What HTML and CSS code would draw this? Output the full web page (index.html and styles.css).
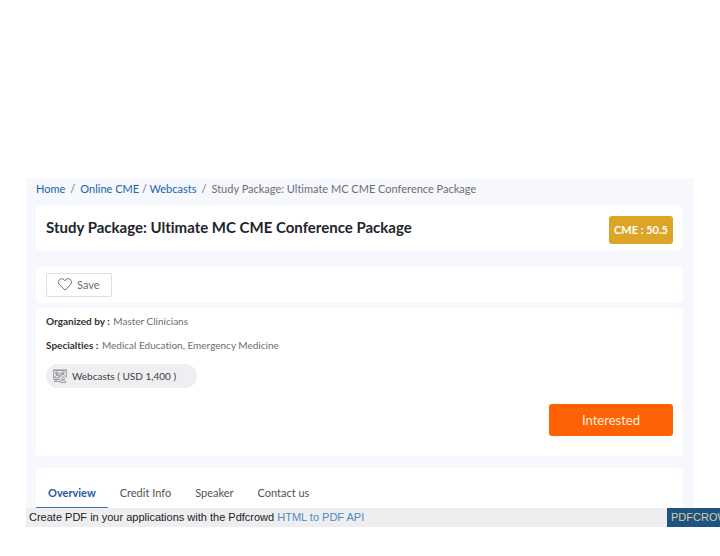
FILE: index.html
```html
<!DOCTYPE html>
<html lang="en">

<head>
    <meta charset="UTF-8">
    <meta name="viewport" content="width=device-width, initial-scale=1.0">
    <title>Study Package: Ultimate MC CME Conference Package</title>
    <link rel="stylesheet" href="styles.css">
</head>

<body>
    <main class="page">
        <nav class="breadcrumb" aria-label="Breadcrumb">
            <a href="#">Home</a>
            <span class="divider">/</span>
            <span><a href="#">Online CME</a> / <a href="#">Webcasts</a></span>
            <span class="divider">/</span>
            <span>Study Package: Ultimate MC CME Conference Package</span>
        </nav>

        <header class="card title-card">
            <h1>Study Package: Ultimate MC CME Conference Package</h1>
            <span class="credit">CME : 50.5</span>
        </header>

        <div class="card save-card">
            <button type="button" class="save-btn">
                <svg width="14" height="13" viewBox="0 0 14 13" fill="none" stroke="#6c6f73" stroke-linejoin="round">
                    <path d="M7 12.2 1.6 6.8C-.2 4.9.4 2.2 2.2 1.2 4 .2 6 .8 7 2.8 8 .8 10 .2 11.8 1.2c1.8 1 2.4 3.7.6 5.6Z" />
                </svg>
                Save
            </button>
        </div>

        <section class="card details">
            <p><strong>Organized by :</strong> Master Clinicians</p>
            <p><strong>Specialties :</strong> Medical Education, Emergency Medicine</p>
            <div class="webcast">
                <svg width="14" height="14" viewBox="0 0 14 14" fill="none" stroke="#85868a" stroke-width=".8">
                    <path d="M7 10.5H.6V1.5h12.8v7M0 1h14M1 12.4h6M3 10.5v1.9" />
                    <circle cx="4" cy="4.3" r="1.3" />
                    <circle cx="9.8" cy="4" r="1.2" />
                    <path d="M1.8 8.8c0-3.4 4.4-3.4 4.4 0ZM7.4 7.6c.2-2.6 4.6-2.6 4.8 0M6.8 3v5M2 3l4 4M8 6l4-3" />
                    <circle cx="10" cy="9.4" r="1.5" />
                    <path d="M7.2 13.5c0-3.4 5.6-3.4 5.6 0Z" />
                </svg>
                Webcasts ( USD 1,400 )
            </div>
            <button type="button" class="interested-btn">Interested</button>
        </section>

        <nav class="card tabs" aria-label="Sections">
            <a href="#" class="active">Overview</a>
            <a href="#">Credit Info</a>
            <a href="#">Speaker</a>
            <a href="#">Contact us</a>
        </nav>
    </main>

    <footer class="pdf-bar">
        <p>Create PDF in your applications with the Pdfcrowd <a href="#">HTML to PDF API</a></p>
        <a href="#" class="pdf-brand">PDFCROWD</a>
    </footer>
</body>

</html>
```

FILE: styles.css
```css
* {
    box-sizing: border-box;
}

body {
    margin: 0;
    padding-top: 178px;
    font-family: Lato, sans-serif;
    font-size: 11px;
    font-variant-ligatures: none;
    color: #6c6e73;
    background-color: #fff;
    overflow-x: hidden;
}

a {
    color: #1565a9;
    text-decoration: none;
}

p {
    margin: 0;
}

.page {
    margin: 0 26px;
    padding: 0 11px 0 10px;
    background-color: #f7f7fe;
}

.breadcrumb {
    display: flex;
    gap: 5px;
    height: 28px;
    line-height: 22px;
}

.card {
    background-color: #fff;
    border-radius: 4px;
}

.title-card {
    display: flex;
    justify-content: space-between;
    align-items: flex-start;
    padding: 10px 10px 6px;
    margin-bottom: 17px;
}

h1 {
    margin: 0;
    font-size: 15px;
    line-height: 22px;
    font-weight: bold;
    color: #212529;
}

.credit {
    padding: 0 5px;
    border-radius: 3px;
    line-height: 28px;
    font-weight: bold;
    color: #fff;
    background-color: #dda526;
}

.save-card {
    padding: 6px 10px;
    margin-bottom: 5px;
}

.save-btn {
    display: flex;
    align-items: center;
    gap: 5px;
    height: 24px;
    padding: 0 11px 1px;
    border: 1px solid #dcdfe6;
    border-radius: 2px;
    font-family: inherit;
    font-size: 11px;
    color: #6c6e73;
    background-color: #fff;
}

.details {
    display: flex;
    flex-direction: column;
    padding: 1px 10px 20px;
    margin-bottom: 12px;
    font-size: 10px;
    line-height: 24px;
}

.details strong {
    margin-right: 1px;
    color: #303236;
}

.webcast {
    display: flex;
    align-items: center;
    align-self: flex-start;
    gap: 5px;
    padding: 0 21px 0 7px;
    margin: 7px 0 16px;
    border-radius: 12px;
    color: #3c3e42;
    background-color: #efeff1;
}

.interested-btn {
    align-self: flex-end;
    width: 124px;
    height: 32px;
    border: 0;
    border-radius: 3px;
    font-family: inherit;
    font-size: 13px;
    color: #ffeedd;
    background-color: #ff6205;
}

.tabs {
    display: flex;
    border-radius: 4px 4px 0 0;
}

.tabs a {
    padding: 13px 12px 0;
    height: 40px;
    line-height: 24px;
    color: #505256;
}

.tabs .active {
    border-bottom: 1px solid #4a75ab;
    font-weight: bold;
    color: #2358a0;
}

.pdf-bar {
    display: flex;
    margin-left: 26px;
    font-family: "Liberation Sans", Arial, sans-serif;
    line-height: 19px;
    color: #222;
    background-color: #eeeef0;
}

.pdf-bar p {
    flex: 1;
    padding-left: 3px;
}

.pdf-bar p a {
    color: #4a8bc4;
}

.pdf-bar .pdf-brand {
    width: 53px;
    padding-left: 4px;
    overflow: hidden;
    color: #d8cda0;
    background-color: #1d5482;
}
```
